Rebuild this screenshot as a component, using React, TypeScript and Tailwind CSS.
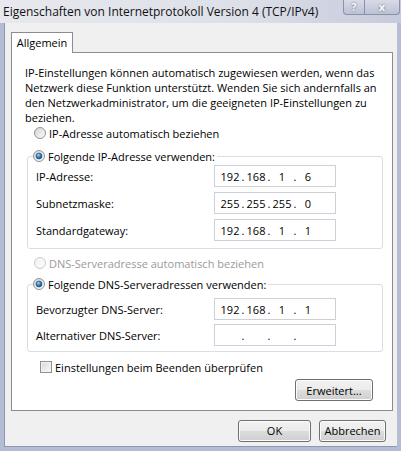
import { Fragment, useId } from "react"

function Radio({ checked = false, disabled = false }: { checked?: boolean; disabled?: boolean }) {
  const id = useId()
  return (
    <svg width="12" height="12" viewBox="0 0 12 12" className="shrink-0">
      <defs>
        <linearGradient id={id + "f"} x1="0" y1="0" x2="1" y2="1">
          <stop offset="0" stopColor={disabled ? "#f1f1f1" : "#d2d2d2"} />
          <stop offset="1" stopColor="#fdfdfd" />
        </linearGradient>
        <radialGradient id={id + "d"} cx="0.4" cy="0.35" r="0.7">
          <stop offset="0" stopColor="#9fd7f7" />
          <stop offset="0.55" stopColor="#2a7fb4" />
          <stop offset="1" stopColor="#123f63" />
        </radialGradient>
      </defs>
      <circle cx="6" cy="6" r="5.5" fill={"url(#" + id + "f)"} stroke={disabled ? "#c9c9c9" : "#8f9498"} />
      {checked && <circle cx="6" cy="6" r="3" fill={"url(#" + id + "d)"} stroke="#1d4e72" strokeWidth="0.6" />}
    </svg>
  )
}

function RadioRow({ label, checked, disabled }: { label: string; checked?: boolean; disabled?: boolean }) {
  return (
    <div className={"h-[16px] flex items-center gap-[3px] " + (disabled ? "text-[#9a9a9a]" : "text-black")}>
      <Radio checked={checked} disabled={disabled} />
      <span>{label}</span>
    </div>
  )
}

function IpField({ parts }: { parts: string[] }) {
  return (
    <div className="w-[122px] h-[22px] border border-[#cdd0d6] bg-white flex items-center pl-[3px]">
      {parts.map((p, i) => (
        <Fragment key={i}>
          {i > 0 && <span className="w-[2px] flex justify-center">.</span>}
          <span className="w-[24px] text-center">{p}</span>
        </Fragment>
      ))}
    </div>
  )
}

function FieldRow({ label, parts }: { label: string; parts: string[] }) {
  return (
    <div className="flex items-center h-[22px] pl-[8px]">
      <span className="w-[178px]">{label}</span>
      <IpField parts={parts} />
    </div>
  )
}

function Button({ label, className }: { label: string; className: string }) {
  return (
    <button
      className={
        "h-[22px] rounded-[3px] border border-[#707070] bg-[linear-gradient(to_bottom,#f2f2f2_0%,#ebebeb_50%,#dddddd_50%,#cfcfcf_100%)] shadow-[inset_0_0_0_1px_#fbfbfb] text-black " +
        className
      }
    >
      {label}
    </button>
  )
}

export default function App() {
  return (
    <div className="w-[401px] h-[451px] flex flex-col bg-[#b4bdd4] font-['Open_Sans',sans-serif] text-[11px] text-black overflow-hidden">
      <div className="h-[23px] shrink-0 flex justify-between items-start bg-[linear-gradient(to_right,#e7e9ee_0%,#dde0e8_60%,#c5cadc_100%)]">
        <span className="pl-[3px] pt-[4px] text-[12px] leading-[15px] text-[#111]">
          Eigenschaften von Internetprotokoll Version 4 (TCP/IPv4)
        </span>
        <div className="flex mr-[1px]">
          <div className="w-[22px] h-[15px] border border-t-0 border-[#8a92a8] rounded-bl-[4px] bg-[linear-gradient(to_bottom,#d8dbe6,#bcc2d5)] flex items-center justify-center text-[10px] font-bold text-white [text-shadow:0_0_2px_#4b5670]">
            ?
          </div>
          <div className="w-[35px] h-[15px] border border-t-0 border-l-0 border-[#8a92a8] rounded-br-[4px] bg-[linear-gradient(to_bottom,#d8dbe6,#bcc2d5)] flex items-center justify-center text-[11px] font-bold text-white [text-shadow:0_0_2px_#4b5670]">
            x
          </div>
        </div>
      </div>

      <div className="flex-1 mx-[4px] mb-[4px] bg-[#f0f0f0] border-l border-b border-[#8d97b0] flex flex-col pt-[9px] px-[6px]">
        <div className="w-[62px] h-[21px] -mb-px relative bg-white border border-b-0 border-[#898c95] flex items-center justify-center">
          Allgemein
        </div>
        <div className="h-[359px] w-[382px] bg-white border border-[#898c95] flex flex-col pl-[13px] pt-[12px] leading-[15px]">
          <p>
            IP-Einstellungen können automatisch zugewiesen werden, wenn das
            <br />
            Netzwerk diese Funktion unterstützt. Wenden Sie sich andernfalls an
            <br />
            den Netzwerkadministrator, um die geeigneten IP-Einstellungen zu
            <br />
            beziehen.
          </p>

          <div className="ml-[9px]">
            <RadioRow label="IP-Adresse automatisch beziehen" />
          </div>

          <fieldset className="mt-[7px] ml-[2px] w-[356px] border border-[#d5dfe5] rounded-[3px] pt-[1px] pb-[7px] flex flex-col gap-[5px]">
            <legend className="ml-[5px] pr-[2px]">
              <RadioRow label="Folgende IP-Adresse verwenden:" checked />
            </legend>
            <FieldRow label="IP-Adresse:" parts={["192", "168", "1", "6"]} />
            <FieldRow label="Subnetzmaske:" parts={["255", "255", "255", "0"]} />
            <FieldRow label="Standardgateway:" parts={["192", "168", "1", "1"]} />
          </fieldset>

          <div className="ml-[9px] mt-[6px]">
            <RadioRow label="DNS-Serveradresse automatisch beziehen" disabled />
          </div>

          <fieldset className="mt-[5px] ml-[2px] w-[356px] border border-[#d5dfe5] rounded-[3px] pt-[6px] pb-[5px] flex flex-col gap-[4px]">
            <legend className="ml-[5px] pr-[2px]">
              <RadioRow label="Folgende DNS-Serveradressen verwenden:" checked />
            </legend>
            <FieldRow label="Bevorzugter DNS-Server:" parts={["192", "168", "1", "1"]} />
            <FieldRow label="Alternativer DNS-Server:" parts={["", "", "", ""]} />
          </fieldset>

          <div className="ml-[15px] mt-[7px] h-[16px] flex items-center gap-[3px]">
            <span className="w-[12px] h-[12px] border border-[#8e8f8f] bg-[linear-gradient(135deg,#d6d6d6,#fbfbfb)] shadow-[inset_0_0_0_1px_#f4f4f4]" />
            <span>Einstellungen beim Beenden überprüfen</span>
          </div>

          <div className="flex justify-end pr-[19px] mt-[4px]">
            <Button label="Erweitert..." className="w-[78px]" />
          </div>
        </div>

        <div className="flex justify-end gap-[8px] mt-[9px] pr-[5px]">
          <Button label="OK" className="w-[73px]" />
          <Button label="Abbrechen" className="w-[67px]" />
        </div>
      </div>
    </div>
  )
}
